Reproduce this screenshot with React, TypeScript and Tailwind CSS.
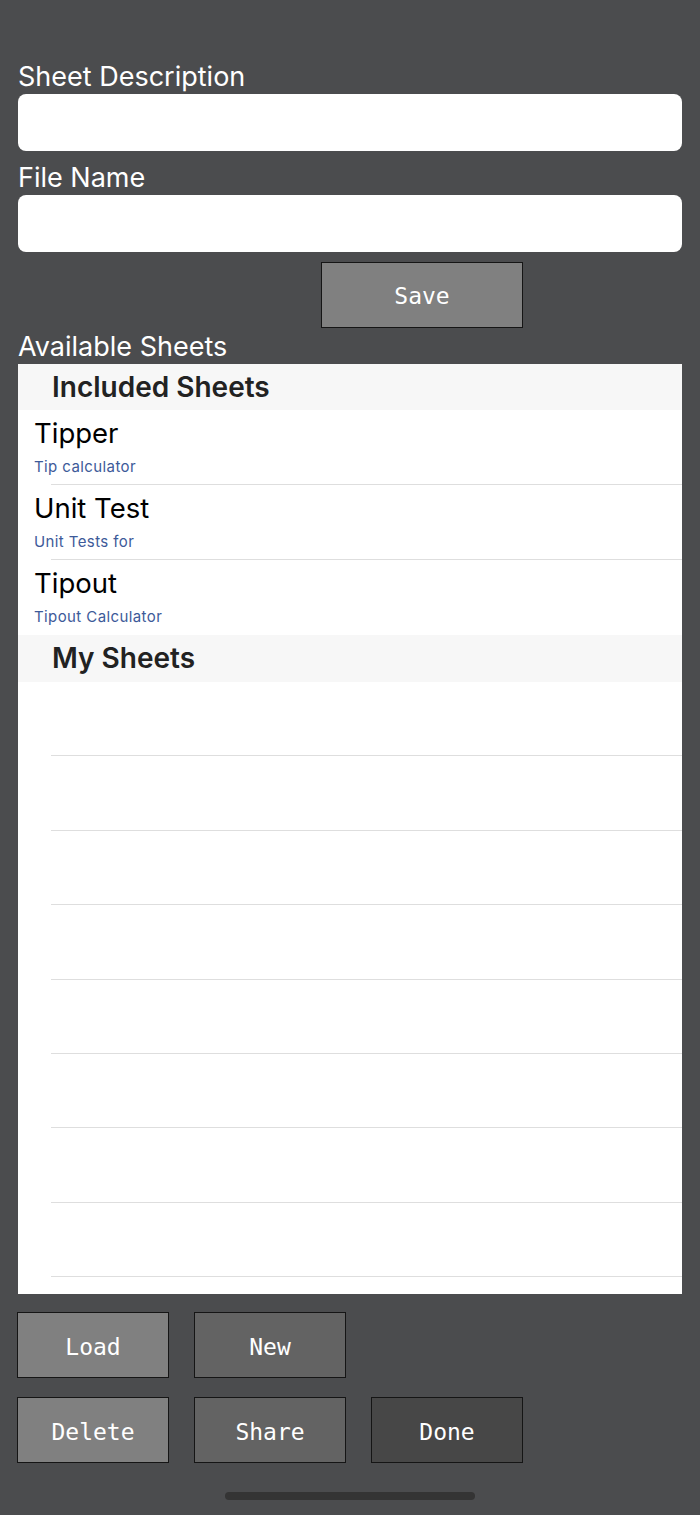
const sans = { fontFamily: 'Inter, "Noto Sans", sans-serif' }
const mono = { fontFamily: '"DejaVu Sans Mono", "Liberation Mono", monospace' }

const included = [
  { title: 'Tipper', subtitle: 'Tip calculator' },
  { title: 'Unit Test', subtitle: 'Unit Tests for' },
  { title: 'Tipout', subtitle: 'Tipout Calculator' },
]

function Label({ children }: { children: string }) {
  return <div className="h-[34px] text-[27px] leading-[34px] text-white">{children}</div>
}

function Field() {
  return <div className="h-[57px] rounded-[8px] bg-white" />
}

function ActionButton({ label, tone }: { label: string; tone: string }) {
  return (
    <button
      className={`flex h-[66px] w-[152px] items-center justify-center border border-[#151515] pt-[4px] text-[23px] text-white ${tone}`}
      style={mono}
    >
      {label}
    </button>
  )
}

function SectionHeader({ title, tall }: { title: string; tall?: boolean }) {
  return (
    <div
      className={`${tall ? 'h-[47px]' : 'h-[46px]'} bg-[#f7f7f7] pl-[34px] pt-[6px] text-[28px] font-semibold leading-[34px] text-[#222]`}
    >
      {title}
    </div>
  )
}

export default function App() {
  return (
    <div className="min-h-[1515px] bg-[#4b4c4e] px-[18px] pt-[60px]" style={sans}>
      <Label>Sheet Description</Label>
      <Field />
      <div className="mt-[10px]">
        <Label>File Name</Label>
      </div>
      <Field />

      <button
        className="ml-[303px] mt-[10px] flex h-[66px] w-[202px] items-center justify-center border border-[#151515] bg-[#808080] pt-[3px] text-[23px] text-white"
        style={mono}
      >
        Save
      </button>

      <div className="mt-[2px]">
        <Label>Available Sheets</Label>
      </div>

      <div className="h-[930px] overflow-hidden bg-white">
        <SectionHeader title="Included Sheets" />
        {included.map((sheet, i) => (
          <div key={sheet.title} className="relative h-[75px] pl-[16px] pt-[6px]">
            <div className="text-[27.5px] leading-[34px] text-black">{sheet.title}</div>
            <div className="mt-[8px] text-[15px] leading-[18px] tracking-[0.4px] text-[#3d5a99]">
              {sheet.subtitle}
            </div>
            {i < included.length - 1 && (
              <div className="absolute bottom-0 left-[33px] right-0 h-px bg-[#dedede]" />
            )}
          </div>
        ))}
        <SectionHeader title="My Sheets" tall />
        {Array.from({ length: 9 }).map((_, i) => (
          <div key={i} className="relative h-[74.4px]">
            <div className="absolute bottom-0 left-[33px] right-0 h-px bg-[#dedede]" />
          </div>
        ))}
      </div>

      <div className="-ml-px mt-[18px] flex gap-[25px]">
        <ActionButton label="Load" tone="bg-[#808080]" />
        <ActionButton label="New" tone="bg-[#636363]" />
      </div>
      <div className="-ml-px mt-[19px] flex gap-[25px]">
        <ActionButton label="Delete" tone="bg-[#808080]" />
        <ActionButton label="Share" tone="bg-[#636363]" />
        <ActionButton label="Done" tone="bg-[#474747]" />
      </div>

      <div className="mx-auto mt-[29px] h-[8px] w-[250px] rounded-full bg-[#343434]" />
    </div>
  )
}
